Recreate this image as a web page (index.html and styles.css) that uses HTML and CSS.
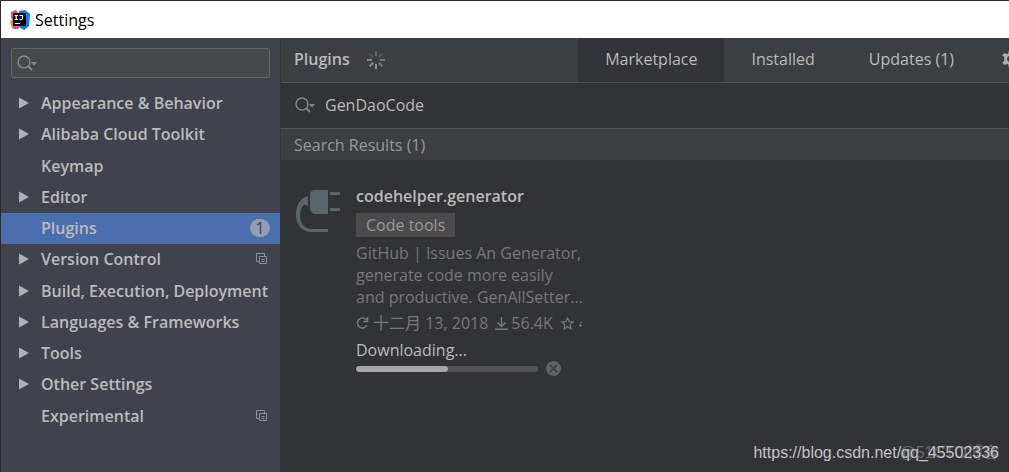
FILE: index.html
```html
<!DOCTYPE html>
<html lang="en">
<head>
<meta charset="utf-8">
<title>Settings</title>
<link rel="stylesheet" href="styles.css">
</head>
<body>
<svg class="defs" aria-hidden="true">
  <symbol id="arrow" viewBox="0 0 10 12"><path d="M0 .5 10 6 0 11.5Z" fill="#afb1b3"/></symbol>
  <symbol id="copy" viewBox="0 0 12 12"><path d="M3 8.500H.5V.5h8V3M3.500 3.500h7v7h-7zM5.500 6.500h3M5.500 8.500h3" fill="none" stroke="#87939a"/></symbol>
  <symbol id="search" viewBox="0 0 20 16"><circle cx="7" cy="7" r="6" fill="none" stroke="#7f8b91" stroke-width="1.400"/><path d="m11 11 4 4" stroke="#7f8b91" stroke-width="1.800"/><path d="M14 7h6l-3 3.500Z" fill="#7f8b91"/></symbol>
</svg>
<div class="window">
  <header class="titlebar">
    <svg class="logo" viewBox="0 0 20 20" aria-hidden="true">
      <path d="M1 2 6 0 10 6 5 14 1 8Z" fill="#fe4857"/>
      <path d="M0 12 4 7 9 18 5 19 2 18Z" fill="#fc801d"/>
      <path d="M9 1 15 0 20 4 19 16 14 20 9 17Z" fill="#087cfa"/>
      <path d="M3 17 10 15 8 19 4 19Z" fill="#ef3f72"/>
      <path d="M3 3h13v13H3z" fill="#000"/>
      <path d="M4.500 5.500h3.500M6.200 5.500v4M4.500 9.500h3.500M9.500 5.500h3v3q0 1.500-3 1M5 13.500h5" fill="none" stroke="#fff" stroke-width="1.200"/>
    </svg>
    <span>Settings</span>
  </header>
  <div class="body">
    <aside class="sidebar">
      <label class="filter"><svg class="search-icon" aria-hidden="true"><use href="#search"/></svg><input type="text" aria-label="Search settings"></label>
      <nav class="tree">
        <a class="row" href="#"><svg class="arrow"><use href="#arrow"/></svg><span>Appearance &amp; Behavior</span></a>
        <a class="row" href="#"><svg class="arrow"><use href="#arrow"/></svg><span>Alibaba Cloud Toolkit</span></a>
        <a class="row leaf" href="#"><span>Keymap</span></a>
        <a class="row" href="#"><svg class="arrow"><use href="#arrow"/></svg><span>Editor</span></a>
        <a class="row leaf selected" href="#"><span>Plugins</span><span class="count">1</span></a>
        <a class="row" href="#"><svg class="arrow"><use href="#arrow"/></svg><span>Version Control</span><svg class="copy"><use href="#copy"/></svg></a>
        <a class="row" href="#"><svg class="arrow"><use href="#arrow"/></svg><span>Build, Execution, Deployment</span></a>
        <a class="row" href="#"><svg class="arrow"><use href="#arrow"/></svg><span>Languages &amp; Frameworks</span></a>
        <a class="row" href="#"><svg class="arrow"><use href="#arrow"/></svg><span>Tools</span></a>
        <a class="row" href="#"><svg class="arrow"><use href="#arrow"/></svg><span>Other Settings</span></a>
        <a class="row leaf" href="#"><span>Experimental</span><svg class="copy"><use href="#copy"/></svg></a>
      </nav>
    </aside>
    <main class="content">
      <div class="tabs">
        <h1>Plugins</h1>
        <svg class="spinner" viewBox="0 0 18 18" fill="none" stroke-width="2" aria-hidden="true">
          <path d="M9 0v5" stroke="#626769"/><path d="m15.400 2.600-3.500 3.500" stroke="#5a6063"/><path d="M13 9h5" stroke="#6c7376"/><path d="m11.900 11.900 3.500 3.500" stroke="#777e82"/><path d="M9 13v5" stroke="#89969c"/><path d="m6.100 11.900-3.500 3.500" stroke="#89969c"/><path d="M0 9h5" stroke="#7c878c"/><path d="M2.600 2.600l3.500 3.500" stroke="#50565a"/>
        </svg>
        <div class="tab-buttons">
          <button class="tab active" type="button">Marketplace</button>
          <button class="tab" type="button">Installed</button>
          <button class="tab" type="button">Updates (1)</button>
          <button class="gear" type="button" aria-label="Plugin settings"><svg viewBox="0 0 16 16"><path fill="#afb1b3" fill-rule="evenodd" d="M6.500 0h3v2.500l1.500.7L13.200 2l1.600 2.600L12.700 6v4l2.100 1.400-1.600 2.600-2.200-1.200-1.500.7V16h-3v-2.500L5 12.800 2.800 14 .2 11.400 2.300 10V6L.2 4.600 2.800 2 5 3.200l1.500-.7ZM8 5a3 3 0 1 0 0 6 3 3 0 0 0 0-6Z"/></svg></button>
        </div>
      </div>
      <label class="plugin-search"><svg class="search-icon" aria-hidden="true"><use href="#search"/></svg><input type="text" value="GenDaoCode" aria-label="Search plugins"></label>
      <h2 class="results">Search Results (1)</h2>
      <article class="plugin">
        <svg class="plug" viewBox="0 0 44 42" aria-hidden="true" fill="#5b6468"><path d="M18 0h14v24H18q-4-2-4-6V5q0-4 4-5ZM34 2h10v3H34zM34 18h10v3H34zM12 6v11l-2-2c-3-1-6 4-6 10 0 8 4 14 12 14h16v3H15C6 42 0 35 0 25 0 15 4 8 12 6Z"/></svg>
        <div class="details">
          <h3>codehelper.generator</h3>
          <span class="tag">Code tools</span>
          <p class="description">GitHub | Issues An Generator,<br>generate code more easily<br>and productive. GenAllSetter...</p>
          <div class="meta">
            <svg class="refresh" viewBox="0 0 13 13"><path d="M10.500 3A5 5 0 1 0 11 8M11.500 0v4.500H7" fill="none" stroke="#787878" stroke-width="1.500"/></svg><span class="date">十二月 13, 2018</span>
            <svg class="download" viewBox="0 0 13 13"><path d="M6.500 0v9M2.500 5.500l4 4 4-4M0 12.300h13" fill="none" stroke="#787878" stroke-width="1.400"/></svg><span class="downloads">56.4K</span>
            <svg class="star" viewBox="0 0 13 13"><path d="m6.500 1 1.600 3.700 4 .4-3 2.700.9 4-3.500-2.100L3 11.800l.9-4-3-2.700 4-.4Z" fill="none" stroke="#787878" stroke-width="1.200"/></svg><span class="rating">4</span>
          </div>
          <div class="status" id="status">Downloading...</div>
          <div class="progress"><progress max="182" value="92" aria-labelledby="status"></progress><button class="cancel" type="button" aria-label="Cancel"><svg viewBox="0 0 15 15"><circle cx="7.500" cy="7.500" r="7.500" fill="#5b6468"/><path d="m4 4 7 7M11 4l-7 7" stroke="#313335" stroke-width="1.300"/></svg></button></div>
        </div>
      </article>
    </main>
  </div>
  <div class="watermark back">@51CTO博客</div>
  <div class="watermark">https://blog.csdn.net/qq_45502336</div>
</div>
</body>
</html>
```

FILE: styles.css
```css
* { box-sizing: border-box; }
body { margin: 0; background: #313335; }
.defs { position: absolute; width: 0; height: 0; }
.window {
  position: relative;
  display: flex;
  flex-direction: column;
  min-height: 100vh;
  overflow: hidden;
  border-top: 1px solid #2b2b2d;
  border-left: 1px solid #2b2b2d;
  font: 16px/20px "Open Sans", "Noto Sans CJK SC", sans-serif;
  color: #bbb;
}
h1, h2, h3, p { margin: 0; font-size: inherit; }
button { padding: 0; border: 0; background: none; font: inherit; color: inherit; }
svg { display: block; flex: none; }
input { flex: 1; min-width: 0; padding: 0; border: 0; outline: 0; background: none; font: inherit; color: inherit; }

.titlebar { display: flex; align-items: center; gap: 5px; height: 37px; padding: 0 9px; background: #fff; color: #000; }
.logo { width: 20px; height: 20px; }
.body { display: flex; flex: 1; }

.sidebar { flex: none; width: 279px; background: #40434c; }
.filter { display: flex; align-items: center; height: 30px; margin: 10px; padding: 0 5px; border: 1px solid #646464; border-radius: 3px; background: #45494a; }
.search-icon { width: 20px; height: 16px; }
.row { display: flex; align-items: center; height: 31px; padding: 0 12px 2px 18px; color: #bbb; font-weight: 600; text-decoration: none; white-space: nowrap; }
.row:nth-child(4n+3) { margin-top: 1px; }
.row.leaf { padding-left: 40px; }
.arrow { width: 10px; height: 12px; margin-right: 12px; }
.row.selected { padding-right: 10px; background: #4b6eaf; }
.count { width: 20px; height: 18px; margin-left: auto; border-radius: 9px; background: #8fa1b0; color: #40434c; font-weight: 400; line-height: 18px; text-align: center; }
.copy { width: 12px; height: 12px; margin-left: auto; }

.content { flex: 1; min-width: 0; border-left: 1px solid #333638; }
.tabs { display: flex; align-items: center; height: 45px; padding-left: 13px; border-bottom: 1px solid #515151; background: #3c3f41; overflow: hidden; }
.tabs h1 { padding-bottom: 3px; font-weight: 600; }
.spinner { width: 18px; height: 18px; margin-left: 17px; }
.tab-buttons { display: flex; height: 44px; margin: 0 -9px 0 auto; }
.tab { padding: 0 27px 3px; white-space: nowrap; }
.active { background: #323437; }
.gear { margin-left: 21px; padding-bottom: 2px; }
.gear svg { width: 16px; height: 16px; }
.plugin-search { display: flex; align-items: center; gap: 10px; height: 46px; padding: 0 14px 1px; border-bottom: 1px solid #515151; }
.results { height: 31px; padding-left: 13px; background: #3c3f41; color: #999; font-weight: 400; line-height: 32px; }

.plugin { display: flex; gap: 16px; padding: 26px 15px; }
.plug { width: 44px; height: 42px; margin-top: 4px; }
.details { width: 226px; }
.details h3 { font-weight: 600; }
.tag { display: block; width: fit-content; height: 24px; margin-top: 7px; padding: 0 10px; background: #4b4b4b; color: #999; line-height: 24px; }
.description { margin-top: 5px; color: #787878; line-height: 22px; white-space: nowrap; }
.meta { display: flex; align-items: center; height: 20px; margin-top: 5px; overflow: hidden; color: #787878; white-space: nowrap; }
.meta svg { width: 13px; height: 13px; }
.date { margin: 0 7px 0 4px; }
.downloads { margin: 0 8px 0 3px; }
.rating { margin-left: 5px; }
.status { margin-top: 7px; }
.progress { display: flex; align-items: center; gap: 8px; margin-top: 1px; }
progress { width: 182px; height: 6px; border: 0; border-radius: 3px; background: #555; appearance: none; overflow: hidden; }
progress::-webkit-progress-bar { background: #555; }
progress::-webkit-progress-value { border-radius: 3px; background: #a6a6a6; }
.cancel svg { width: 15px; height: 15px; }

.watermark { position: absolute; right: 10px; bottom: 9px; color: #c4c4c4; font: 16px/20px "Liberation Sans", "Noto Sans CJK SC", sans-serif; }
.back { color: #68696b; }
```
